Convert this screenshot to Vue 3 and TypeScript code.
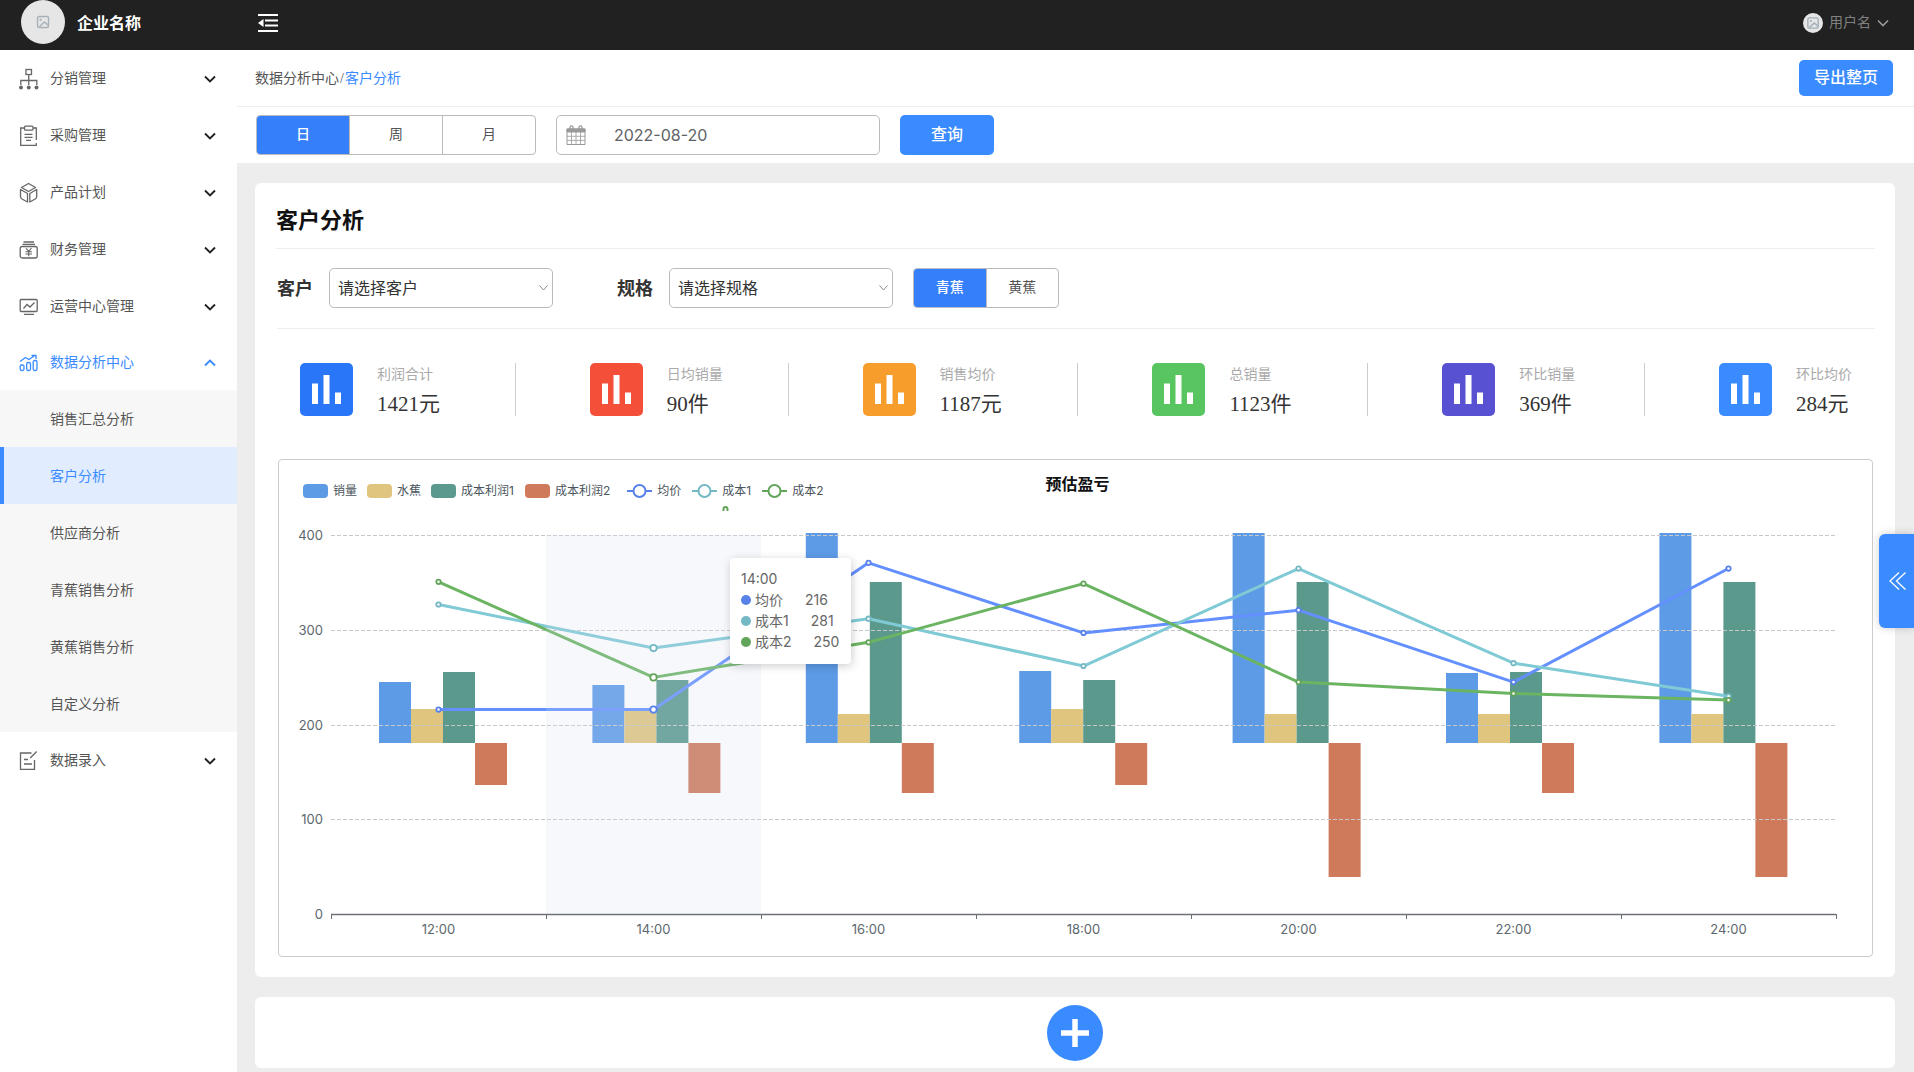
<script setup lang="ts">
import { ref } from 'vue'

interface MenuItem {
  label: string
  icon: string
  children?: string[]
}

const menu: MenuItem[] = [
  { label: '分销管理', icon: 'tree' },
  { label: '采购管理', icon: 'clipboard' },
  { label: '产品计划', icon: 'cube' },
  { label: '财务管理', icon: 'finance' },
  { label: '运营中心管理', icon: 'monitor' },
  {
    label: '数据分析中心',
    icon: 'stats',
    children: ['销售汇总分析', '客户分析', '供应商分析', '青蕉销售分析', '黄蕉销售分析', '自定义分析'],
  },
  { label: '数据录入', icon: 'entry' },
]
const activePage = ref('客户分析')

const periods = ['日', '周', '月']
const period = ref('日')
const kinds = ['青蕉', '黄蕉']
const kind = ref('青蕉')
const date = ref('2022-08-20')

const stats = [
  { label: '利润合计', value: '1421元', color: '#2a76f8' },
  { label: '日均销量', value: '90件', color: '#f44f38' },
  { label: '销售均价', value: '1187元', color: '#f69d2c' },
  { label: '总销量', value: '1123件', color: '#58c561' },
  { label: '环比销量', value: '369件', color: '#5852d2' },
  { label: '环比均价', value: '284元', color: '#3a8bff' },
]

const hours = ['12:00', '14:00', '16:00', '18:00', '20:00', '22:00', '24:00']
const barSeries = [
  { name: '销量', color: '#5d9be6', data: [61, 58, 210, 72, 210, 70, 210] },
  { name: '水蕉', color: '#dfc57e', data: [34, 35, 29, 34, 29, 29, 29] },
  { name: '成本利润1', color: '#5b998d', data: [71, 63, 161, 63, 161, 71, 161] },
  { name: '成本利润2', color: '#cf7a5b', data: [-42, -50, -50, -42, -134, -50, -134] },
]
const lineSeries = [
  { name: '均价', color: '#6490ff', dot: '#5882ea', data: [216, 216, 371, 297, 321, 245, 365] },
  { name: '成本1', color: '#80cad5', dot: '#74b8c4', data: [327, 281, 312, 262, 365, 265, 230] },
  { name: '成本2', color: '#6bb462', dot: '#62a45a', data: [351, 250, 287, 349, 245, 233, 226] },
]

/* chart geometry, in viewBox units */
const left = 52
const step = 215
const zeroY = 454
const unit = 0.9465
const barBase = 283
const hovered = 1
const ticks = [0, 100, 200, 300, 400]

const valueY = (v: number) => zeroY - v * unit
const slotX = (i: number) => left + step * i + step / 2
const barX = (group: number, series: number) => 100 + group * 213.4 + series * 32
const points = (data: number[]) => data.map((v, i) => `${slotX(i)},${valueY(v)}`).join(' ')
</script>

<template>
  <div class="app">
    <header class="topbar">
      <div class="brand">
        <span class="avatar">
          <svg width="14" height="14" viewBox="0 0 14 14" fill="none" stroke="#a9b1b8" stroke-width="1.4">
            <rect x="1.5" y="1.5" width="11" height="11" rx="1.5" />
            <circle cx="4.6" cy="4.8" r="0.5" />
            <path d="M3.5 11.5 8.5 7l4 3.5" />
          </svg>
        </span>
        <strong>企业名称</strong>
      </div>
      <button class="fold" aria-label="收起菜单">
        <svg width="22" height="20" viewBox="0 0 22 20" fill="#fff">
          <rect x="1" y="1" width="20" height="2" />
          <rect x="8" y="6.500" width="13" height="2" />
          <rect x="8" y="11.500" width="13" height="2" />
          <rect x="1" y="17" width="20" height="2" />
          <path d="M1 10 6.500 6v8z" />
        </svg>
      </button>
      <button class="user">
        <span class="avatar small">
          <svg width="12" height="12" viewBox="0 0 14 14" fill="none" stroke="#a3adb5" stroke-width="1.600">
            <rect x="1" y="1" width="12" height="12" rx="1.500" />
            <circle cx="4.500" cy="4.800" r="0.500" />
            <path d="M3 12 8.500 7l4.500 4" />
          </svg>
        </span>
        <span>用户名</span>
        <svg width="12" height="8" viewBox="0 0 12 8" fill="none" stroke="#999" stroke-width="1.600"><path d="m1 1.500 5 5 5-5" /></svg>
      </button>
    </header>

    <div class="body">
      <nav class="sidebar">
        <ul>
          <li v-for="item in menu" :key="item.label" :class="{ open: item.children }">
            <button class="head">
              <svg class="menu-icon" width="20" height="22" viewBox="0 0 20 22" fill="none" stroke="currentColor" stroke-width="1.300">
                <g v-if="item.icon === 'tree'">
                  <rect x="7" y="1.500" width="5.500" height="5" />
                  <path d="M9.750 6.500V17M1.800 17v-4.500h16V17" />
                  <g fill="currentColor" stroke="none"><circle cx="2" cy="19.500" r="2" /><circle cx="9.750" cy="19.500" r="2" /><circle cx="17.500" cy="19.500" r="2" /></g>
                </g>
                <g v-else-if="item.icon === 'clipboard'">
                  <path d="M5.500 3H1.700v17.300h15.600v-2.300M14 3h3.300v12" />
                  <rect x="5.500" y="1.200" width="8.500" height="4" rx="1" />
                  <path d="M5.500 9.300h8M5.500 12.300h8M7 15.300h5" />
                </g>
                <g v-else-if="item.icon === 'cube'">
                  <path d="M9.500 1.500 16.500 5.500 9.500 9.500 2.500 5.500zM1.500 7.500 8.500 11.500v8.500L3 17a3 3 0 0 1-1.500-2.500zM17.700 7.500 10.800 11.500v8.500l5.400-3a3 3 0 0 0 1.500-2.500z" stroke-linejoin="round" />
                </g>
                <g v-else-if="item.icon === 'finance'">
                  <path d="M4.500 3h10.500M3.500 5.300h12.500" />
                  <rect x="1.200" y="7.500" width="17" height="11.500" rx="2" />
                  <path d="m7 9 2.700 3.300L12.500 9M9.700 12.300v5M6.500 12.700h6.500M6.500 15h6.500" stroke-width="1.100" />
                </g>
                <g v-else-if="item.icon === 'monitor'">
                  <rect x="1.200" y="3.500" width="17" height="12" rx="1" />
                  <path d="m4.500 12.500 3.500-4 3 2.500 4.500-4.500M5 18.300h10" />
                </g>
                <g v-else-if="item.icon === 'stats'">
                  <rect x="1.200" y="13" width="3.800" height="5.500" rx="1.500" />
                  <rect x="7.700" y="10.500" width="3.800" height="8" rx="1.500" />
                  <rect x="14.200" y="8.500" width="3.800" height="10" rx="1.500" />
                  <path d="M1 9.500 6.500 5.500l3.500 2L16.500 3M12.500 3.500H17v3.500" />
                </g>
                <g v-else>
                  <path d="M12.500 3H1.500v16.300h14V10M17.700 1.500l-6.500 6.500M5 9.500h4M5 14h8" />
                </g>
              </svg>
              <span>{{ item.label }}</span>
              <svg class="arrow" width="12" height="8" viewBox="0 0 12 8" fill="none" stroke="currentColor" stroke-width="1.900">
                <path :d="item.children ? 'm1 6.500 5-5 5 5' : 'm1 1.500 5 5 5-5'" />
              </svg>
            </button>
            <ul v-if="item.children" class="sub">
              <li v-for="c in item.children" :key="c">
                <a href="#" :class="{ active: c === activePage }" @click.prevent="activePage = c">{{ c }}</a>
              </li>
            </ul>
          </li>
        </ul>
      </nav>

      <main>
        <div class="crumbs">
          <div class="trail"><span>数据分析中心</span><span class="slash">/</span><a href="#">客户分析</a></div>
          <button class="primary export">导出整页</button>
        </div>
        <div class="query">
          <div class="segment periods">
            <button v-for="p in periods" :key="p" :class="{ on: p === period }" @click="period = p">{{ p }}</button>
          </div>
          <label class="date">
            <svg width="20" height="22" viewBox="0 0 20 22" fill="none" stroke="#999" stroke-width="1">
              <path d="M1 5h18v15.500H1z" />
              <path d="M1 5h18v3H1z" fill="#999" />
              <path d="M5.500 8v12.500M10 8v12.500M14.500 8v12.500M1 12.300h18M1 16.400h18" stroke-width="0.800" />
              <path d="M4 6V3.300a1.500 1.500 0 0 1 3 0V6M13 6V3.300a1.500 1.500 0 0 1 3 0V6" stroke-width="1.300" />
            </svg>
            <input v-model="date" type="text" aria-label="日期" />
          </label>
          <button class="primary search">查询</button>
        </div>

        <section class="card">
          <h1>客户分析</h1>
          <div class="filters">
            <label for="customer">客户</label>
            <div class="select">
              <select id="customer"><option>请选择客户</option></select>
              <svg width="9" height="6" viewBox="0 0 9 6" fill="none" stroke="#888"><path d="m.5.500 4 4.500 4-4.500" /></svg>
            </div>
            <label for="spec" class="spec">规格</label>
            <div class="select">
              <select id="spec"><option>请选择规格</option></select>
              <svg width="9" height="6" viewBox="0 0 9 6" fill="none" stroke="#888"><path d="m.5.500 4 4.500 4-4.500" /></svg>
            </div>
            <div class="segment kinds">
              <button v-for="k in kinds" :key="k" :class="{ on: k === kind }" @click="kind = k">{{ k }}</button>
            </div>
          </div>

          <div class="stats">
            <div v-for="s in stats" :key="s.label" class="stat">
              <svg width="53" height="53" viewBox="0 0 53 53">
                <rect width="53" height="53" rx="5" :fill="s.color" />
                <path fill="#fff" d="M12 20.500h6V41h-6zM23.500 12h6v29h-6zM35 29.500h6V41h-6z" />
              </svg>
              <div class="figures">
                <span class="name">{{ s.label }}</span>
                <span class="value">{{ s.value }}</span>
              </div>
            </div>
          </div>

          <div class="chart">
            <svg class="plot" viewBox="0 0 1593 496">
              <g v-for="(s, si) in barSeries" :key="s.name" :fill="s.color">
                <rect v-for="(v, i) in s.data" :key="i" :x="barX(i, si)" :y="v > 0 ? barBase - v : barBase" width="32" :height="Math.abs(v)" />
              </g>
              <g stroke="#c8c8cc" stroke-dasharray="4 2">
                <line v-for="t in ticks.slice(1)" :key="t" :x1="left" :x2="left + step * 7 - 1" :y1="Math.round(valueY(t)) + 0.5" :y2="Math.round(valueY(t)) + 0.5" />
              </g>
              <path :d="`M${left} ${zeroY + 0.5}h${step * 7}`" stroke="#6e7079" stroke-width="1.500" />
              <path v-for="i in 8" :key="i" :d="`M${left + 0.5 + (i - 1) * step} ${zeroY}v5`" stroke="#6e7079" />
              <polyline v-for="s in lineSeries" :key="s.name" :points="points(s.data)" fill="none" :stroke="s.color" stroke-width="3" stroke-linejoin="bevel" />
              <rect :x="left + step * hovered" y="75" :width="step" :height="zeroY - 75" fill="rgba(210, 219, 238, 0.2)" />
              <g v-for="s in lineSeries" :key="s.name" fill="#fff" :stroke="s.dot" stroke-width="1.800">
                <circle v-for="(v, i) in s.data" :key="i" :cx="slotX(i)" :cy="valueY(v)" :r="i === hovered ? 3.2 : 2.2" />
              </g>
              <path d="M444.500 51v-2a2 2 0 0 1 4 0v2" fill="none" stroke="#62a45a" stroke-width="2" />
              <g class="axis" text-anchor="end">
                <text v-for="t in ticks" :key="t" x="44" :y="valueY(t) + 5">{{ t }}</text>
              </g>
              <g class="axis" text-anchor="middle">
                <text v-for="(h, i) in hours" :key="h" :x="slotX(i)" y="474">{{ h }}</text>
              </g>
            </svg>

            <h2>预估盈亏</h2>
            <ul class="legend">
              <li v-for="s in barSeries" :key="s.name">
                <svg width="25" height="14"><rect width="25" height="14" rx="4" :fill="s.color" /></svg>{{ s.name }}
              </li>
              <li v-for="s in lineSeries" :key="s.name" class="line-key">
                <svg width="25" height="14" fill="#fff" :stroke="s.dot" stroke-width="2"><path d="M0 7h25" /><circle cx="12.500" cy="7" r="6" /></svg>{{ s.name }}
              </li>
            </ul>

            <div class="tooltip">
              <div>{{ hours[hovered] }}</div>
              <div v-for="s in lineSeries" :key="s.name" class="row">
                <svg width="10" height="10"><circle cx="5" cy="5" r="5" :fill="s.dot" /></svg>
                <span>{{ s.name }}</span>
                <span class="num">{{ s.data[hovered] }}</span>
              </div>
            </div>
          </div>
        </section>

        <section class="card add-card">
          <button class="add" aria-label="添加">
            <svg width="28" height="28" viewBox="0 0 28 28"><path d="M14 0v28M0 14h28" stroke="#fff" stroke-width="5.500" /></svg>
          </button>
        </section>
      </main>
    </div>

    <button class="drawer" aria-label="展开面板">
      <svg width="18" height="18" viewBox="0 0 18 18" fill="none" stroke="#fff" stroke-width="1.300"><path d="M10 .5 1 9l9 8.500M16.500.5l-9 8.500 9 8.500" /></svg>
    </button>
  </div>
</template>

<style>
body {
  background: #ededed;
}
</style>

<style scoped>
* {
  box-sizing: border-box;
}
.app {
  min-height: 100vh;
  display: flex;
  flex-direction: column;
  color: #555;
  font: 14px/20px "Liberation Serif", "Noto Sans CJK SC", serif;
}
button,
input,
select {
  margin: 0;
  padding: 0;
  border: 0;
  background: none;
  color: inherit;
  font: inherit;
  outline: none;
  cursor: pointer;
}
ul {
  list-style: none;
  margin: 0;
  padding: 0;
}
a {
  color: #3a8bff;
  text-decoration: none;
}
svg {
  display: block;
  flex: none;
}

.topbar {
  height: 50px;
  display: flex;
  align-items: flex-start;
  background: #212121;
}
.brand {
  width: 237px;
  display: flex;
  align-items: center;
  gap: 12px;
  padding-left: 21px;
  color: #fff;
  font-size: 16px;
}
.brand strong {
  padding-top: 3px;
}
.avatar {
  width: 44px;
  height: 44px;
  display: flex;
  align-items: center;
  justify-content: center;
  border-radius: 50%;
  background: #e6e6e6;
}
.avatar.small {
  width: 20px;
  height: 20px;
}
.fold {
  margin: 13px 0 0 20px;
}
.user {
  display: flex;
  align-items: center;
  gap: 6px;
  margin: 13px 25px 0 auto;
  color: #808080;
}

.body {
  flex: 1;
  display: flex;
}
.sidebar {
  width: 237px;
  flex: none;
  background: #fff;
}
.head {
  width: 100%;
  height: 57px;
  display: flex;
  align-items: center;
  padding: 0 21px 0 19px;
}
.head span {
  padding-top: 1px;
}
.menu-icon {
  margin-right: 11px;
  color: #666;
}
.arrow {
  margin-left: auto;
  color: #222;
}
.open .head {
  height: 55px;
}
.open .head,
.open .head svg {
  color: #3a8bff;
}
.sub a {
  height: 57px;
  display: flex;
  align-items: center;
  padding: 2px 0 0 46px;
  border-left: 4px solid #f7f7f7;
  background: #f7f7f7;
  color: #555;
}
.sub a.active {
  border-color: #3a8bff;
  background: #e1edff;
  color: #3a8bff;
}

main {
  flex: 1;
  min-width: 0;
}
.crumbs {
  height: 57px;
  display: flex;
  align-items: center;
  justify-content: space-between;
  padding: 0 21px 0 18px;
  border-bottom: 1px solid #eee;
  background: #fff;
}
.trail {
  padding-top: 2px;
}
.slash {
  padding: 0 1px;
}
.primary {
  border-radius: 5px;
  background: #3a8bff;
  color: #fff;
  font-size: 16px;
  font-weight: 500;
}
.export {
  width: 94px;
  height: 36px;
}
.query {
  height: 56px;
  display: flex;
  align-items: center;
  gap: 20px;
  padding: 0 19px;
  background: #fff;
}
.segment {
  height: 40px;
  display: flex;
  border: 1px solid #bbb;
  border-radius: 4px;
  overflow: hidden;
  background: #fff;
}
.segment button {
  flex: 1;
}
.segment button + button {
  border-left: 1px solid #bbb;
}
.segment .on {
  background: #367ffa;
  color: #fff;
  font-weight: 500;
}
.periods {
  width: 280px;
}
.kinds {
  width: 146px;
  margin-left: 20px;
}
.date {
  width: 324px;
  height: 40px;
  display: flex;
  align-items: center;
  gap: 28px;
  padding-left: 9px;
  border: 1px solid #bbb;
  border-radius: 5px;
}
.date input {
  flex: 1;
  min-width: 0;
  color: #606266;
  font: 16px/20px Inter, sans-serif;
}
.search {
  width: 94px;
  height: 40px;
}

.card {
  margin: 20px 19px 0 18px;
  padding: 0 20px 20px 21px;
  border-radius: 6px;
  background: #fff;
}
h1 {
  margin: 0;
  padding: 21px 0 10px;
  border-bottom: 1px solid #eee;
  color: #111;
  font-size: 22px;
  line-height: 34px;
  font-weight: 600;
}
.filters {
  display: flex;
  align-items: center;
  margin-left: 1px;
  padding: 19px 0 20px;
  border-bottom: 1px solid #eee;
}
.filters label {
  margin-right: 16px;
  padding-top: 2px;
  color: #333;
  font-size: 18px;
  font-weight: 700;
}
.filters .spec {
  margin-left: 64px;
}
.select {
  position: relative;
  width: 224px;
}
.select select {
  width: 100%;
  height: 40px;
  padding: 1px 9px 0 8px;
  border: 1px solid #bbb;
  border-radius: 5px;
  appearance: none;
  color: #333;
  font-size: 16px;
}
.select svg {
  position: absolute;
  right: 5px;
  top: 17px;
  pointer-events: none;
}

.stats {
  display: grid;
  grid-template-columns: 290fr 273fr 290fr 290fr 277fr 136px;
  padding: 34px 20px 43px 24px;
}
.stat {
  display: flex;
  align-items: stretch;
  height: 53px;
}
.stat:not(:last-child)::after {
  content: "";
  width: 1px;
  margin: 0 74px 0 auto;
  background: #ccc;
}
.figures {
  display: flex;
  flex-direction: column;
  gap: 4px;
  padding: 2px 0 0 24px;
  white-space: nowrap;
}
.name {
  color: #aaa;
}
.value {
  color: #333;
  font-size: 21px;
  line-height: 30px;
}

.chart {
  position: relative;
  margin: 0 2px;
  border: 1px solid #ccc;
  border-radius: 4px;
}
.plot {
  width: 100%;
  height: auto;
}
.axis {
  fill: #5c666e;
  font: 13px Inter, sans-serif;
}
h2 {
  position: absolute;
  top: 15px;
  left: 0;
  right: 0;
  margin: 0 0 0 4px;
  text-align: center;
  color: #111;
  font-size: 16px;
  line-height: 20px;
}
.legend {
  position: absolute;
  top: 21px;
  left: 24px;
  display: flex;
  gap: 10px;
  color: #4b555d;
  font: 12px/20px Inter, "Noto Sans CJK SC", sans-serif;
}
.legend li {
  display: flex;
  align-items: center;
  gap: 5px;
}
.legend li:nth-child(n + 4) {
  margin-left: 1px;
}
.legend li:not(.line-key) + .line-key {
  margin-left: 7px;
}
.tooltip {
  position: absolute;
  left: 451px;
  top: 98px;
  width: 121px;
  padding: 10px 11px 12px;
  border-radius: 4px;
  background: #fff;
  box-shadow: 1px 2px 10px rgba(0, 0, 0, 0.2);
  color: #666;
  font: 14px/21px Inter, "Noto Sans CJK SC", sans-serif;
  white-space: nowrap;
}
.row {
  height: 21px;
  display: flex;
  align-items: center;
  gap: 4px;
}
.num {
  margin-left: 18px;
}

.add-card {
  display: flex;
  justify-content: center;
  height: 71px;
  margin-bottom: 4px;
  padding: 8px 0 7px;
}
.add {
  width: 56px;
  height: 56px;
  display: flex;
  align-items: center;
  justify-content: center;
  border-radius: 50%;
  background: #3a8bff;
}
.drawer {
  position: fixed;
  right: 0;
  top: 534px;
  width: 35px;
  height: 94px;
  padding-left: 10px;
  border-radius: 6px 0 0 6px;
  background: #3a8bff;
  box-shadow: 0 0 8px rgba(0, 0, 0, 0.2);
}
</style>
